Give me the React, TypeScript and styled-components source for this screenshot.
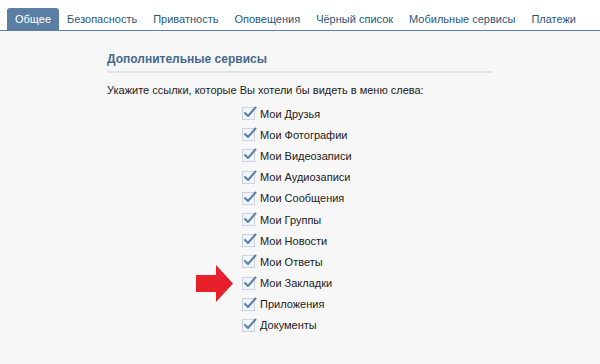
import styled, { createGlobalStyle } from 'styled-components';

const GlobalStyle = createGlobalStyle`
  html, body {
    margin: 0;
    padding: 0;
    background: #f7f7f7;
  }
  body {
    font-family: Tahoma, "DejaVu Sans", "Liberation Sans", sans-serif;
    font-size: 11px;
  }
`;

const Page = styled.div`
  width: 600px;
  height: 364px;
  background: #f7f7f7;
  overflow: hidden;
`;

const TabBar = styled.nav`
  display: flex;
  align-items: flex-end;
  height: 30px;
  padding-left: 7px;
  background: #fff;
  border-bottom: 1px solid #5b7ea5;
`;

const Tab = styled.div<{ $active?: boolean }>`
  height: 22px;
  line-height: 23px;
  padding: 0 8px 0 8px;
  border-radius: 3px 3px 0 0;
  font-family: "Liberation Sans", Arial, sans-serif;
  font-size: 11px;
  color: ${p => (p.$active ? '#fff' : '#2b587a')};
  background: ${p => (p.$active ? '#5b7ea5' : 'transparent')};
  white-space: nowrap;
`;

const Content = styled.main`
  padding: 21px 107px 0 107px;
`;

const SectionTitle = styled.h2`
  margin: 0;
  padding: 0 0 5px 0;
  font-family: "Liberation Sans", Arial, sans-serif;
  font-size: 12px;
  font-weight: 700;
  color: #45688e;
  border-bottom: 2px solid #dfe3e8;
  width: 386px;
`;

const Hint = styled.p`
  margin: 11px 0 7px 0;
  font-family: "Liberation Sans", Arial, sans-serif;
  font-size: 11px;
  color: #222;
`;

const List = styled.ul`
  list-style: none;
  margin: 0;
  padding: 0 0 0 135px;
`;

const Row = styled.li`
  display: flex;
  align-items: center;
  gap: 5px;
  height: 21.2px;
  font-family: "Liberation Sans", Arial, sans-serif;
  font-size: 11px;
  color: #222;
  position: relative;
`;

const Box = styled.span`
  width: 13px;
  height: 13px;
  border: 1px solid #c9d4e0;
  background: #f1f4f8;
  position: relative;
  flex-shrink: 0;
  box-sizing: border-box;

  svg {
    position: absolute;
    left: 0px;
    top: -3px;
  }
`;

const Arrow = styled.svg`
  position: absolute;
  left: -47px;
  top: -9px;
`;

const items = [
  'Мои Друзья',
  'Мои Фотографии',
  'Мои Видеозаписи',
  'Мои Аудиозаписи',
  'Мои Сообщения',
  'Мои Группы',
  'Мои Новости',
  'Мои Ответы',
  'Мои Закладки',
  'Приложения',
  'Документы',
];

const tabs = [
  'Общее',
  'Безопасность',
  'Приватность',
  'Оповещения',
  'Чёрный список',
  'Мобильные сервисы',
  'Платежи',
];

const Check = () => (
  <svg width="14" height="14" viewBox="0 0 14 14">
    <path d="M2 8 L5 11 L12.5 2.5" fill="none" stroke="#5a7fa8" strokeWidth="2" strokeLinecap="round" strokeLinejoin="round" />
  </svg>
);

export default function App() {
  return (
    <Page>
      <GlobalStyle />
      <TabBar>
        {tabs.map((t, i) => (
          <Tab key={t} $active={i === 0}>
            {t}
          </Tab>
        ))}
      </TabBar>
      <Content>
        <SectionTitle>Дополнительные сервисы</SectionTitle>
        <Hint>Укажите ссылки, которые Вы хотели бы видеть в меню слева:</Hint>
        <List>
          {items.map(item => (
            <Row key={item}>
              {item === 'Мои Закладки' && (
                <Arrow width="39" height="39" viewBox="0 0 39 39">
                  <path d="M1 11 H21 V1 L38 19.5 L21 38 V28 H1 Z" fill="#e8202b" />
                </Arrow>
              )}
              <Box>
                <Check />
              </Box>
              {item}
            </Row>
          ))}
        </List>
      </Content>
    </Page>
  );
}
